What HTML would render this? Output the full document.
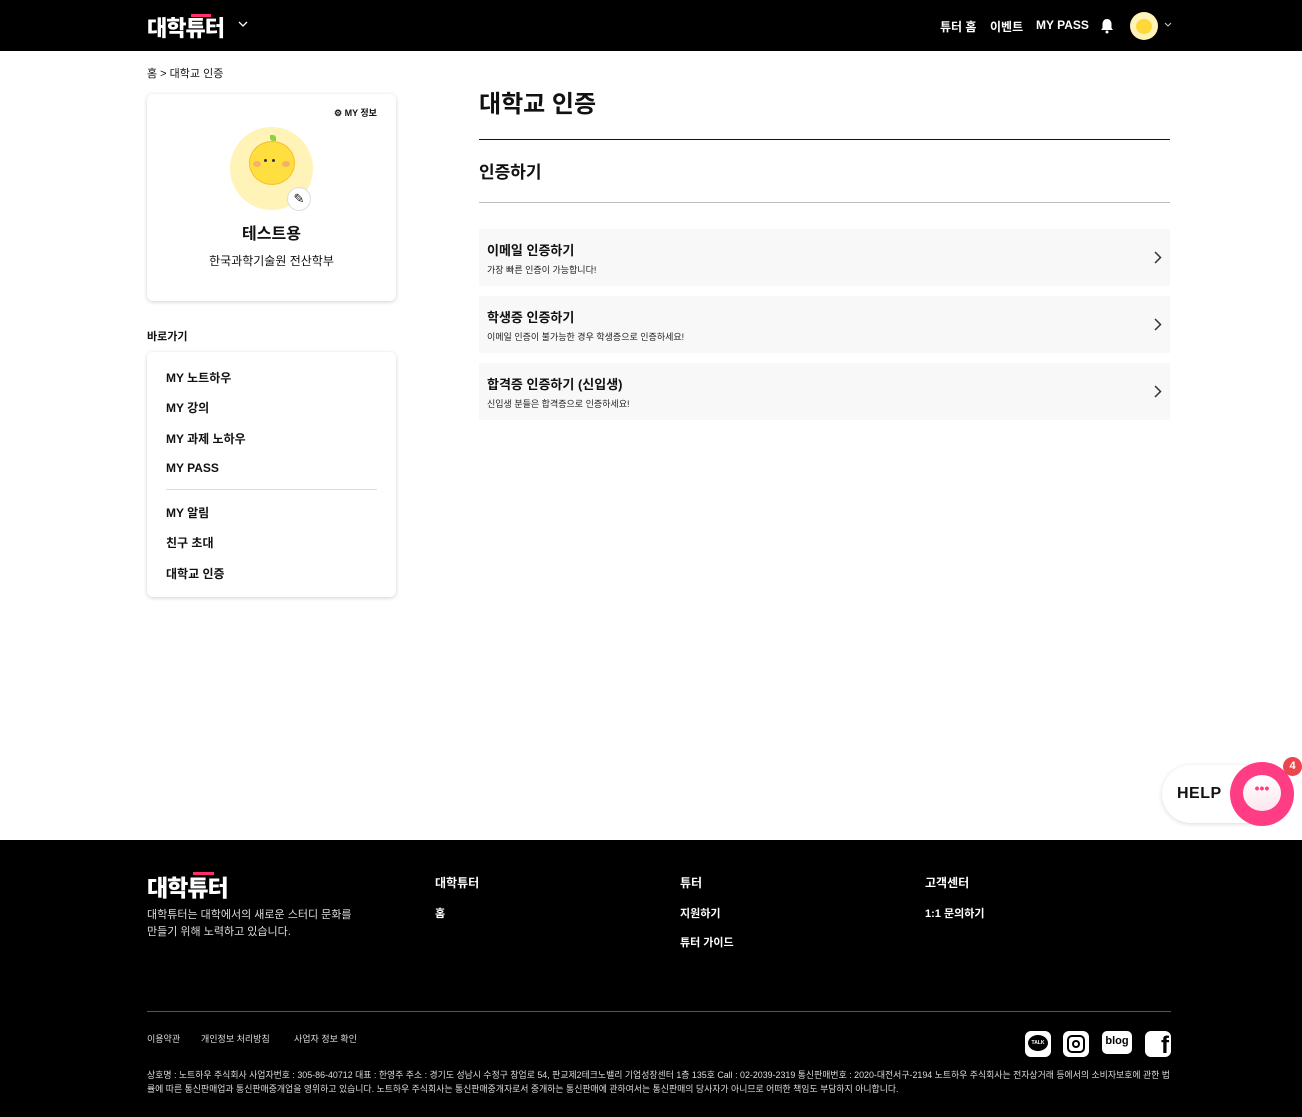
<!DOCTYPE html>
<html><head><meta charset="utf-8"><style>
*{margin:0;padding:0;box-sizing:border-box}
body{width:1302px;height:1117px;background:#fff;font-family:"Liberation Sans","Noto Sans CJK KR",sans-serif;color:#111;position:relative;overflow:hidden}
.abs{position:absolute}
.logo{font-weight:900;color:#fff;letter-spacing:-1px;position:absolute}
.logo i{position:absolute;background:#ff2f6e;height:3px}
.hd{position:absolute;left:0;top:0;width:1302px;height:51px;background:#000}
.nav{position:absolute;top:18px;color:#fff;font-weight:700;font-size:12px}
.card{position:absolute;background:#fff;border-radius:6px;box-shadow:0 1px 4px rgba(0,0,0,.18)}
.mi{position:absolute;left:19px;font-size:12px;font-weight:700}
.item{position:absolute;left:479px;width:691px;height:57px;background:#f8f8f8}
.item b{position:absolute;left:8px;top:11px;font-size:13px}
.item span{position:absolute;left:8px;top:34px;font-size:9px;color:#222}
.item svg{position:absolute;right:8px;top:22px}
.ft{position:absolute;left:0;top:840px;width:1302px;height:277px;background:#000;color:#fff}
.fh{position:absolute;font-size:12px;font-weight:700}
.fl{position:absolute;font-size:11px;font-weight:700}
</style></head><body>
<div class="hd">
  <div class="logo" style="left:147px;top:11px;font-size:22px">대학튜터<i style="left:44px;top:3px;width:20px"></i></div>
  <svg class="abs" style="left:238px;top:20px" width="10" height="8"><path d="M1 2l4 4 4-4" stroke="#fff" fill="none" stroke-width="1.3"/></svg>
  <div class="nav" style="left:940px">튜터 홈</div>
  <div class="nav" style="left:990px">이벤트</div>
  <div class="nav" style="left:1036px">MY PASS</div>
  <svg class="abs" style="left:1100px;top:18px" width="14" height="16"><path d="M7 1c-3 0-4.5 2.5-4.5 5v4L1 12h12l-1.5-2V6C11.5 3.5 10 1 7 1z" fill="#fff"/><circle cx="7" cy="14" r="1.5" fill="#fff"/></svg>
  <div class="abs" style="left:1130px;top:12px;width:28px;height:28px;border-radius:50%;background:#fff3b8"><div class="abs" style="left:6px;top:7px;width:16px;height:15px;border-radius:50%;background:#ffd83a"></div></div>
  <svg class="abs" style="left:1164px;top:22px" width="8" height="6"><path d="M1 1l3 3 3-3" stroke="#ccc" fill="none"/></svg>
</div>
<div class="abs" style="left:147px;top:65px;font-size:11px">홈 &gt; 대학교 인증</div>
<div class="card" style="left:147px;top:94px;width:249px;height:207px">
  <div class="abs" style="left:187px;top:12px;font-size:9px;font-weight:700">⚙ MY 정보</div>
  <div class="abs" style="left:83px;top:33px;width:83px;height:83px;border-radius:50%;background:#fff3b8">
    <div class="abs" style="left:19px;top:14px;width:46px;height:44px;border-radius:50%;background:#ffde3f;border:1px solid #f5c02c"></div>
    <div class="abs" style="left:34px;top:32px;width:3px;height:3px;border-radius:50%;background:#333"></div>
    <div class="abs" style="left:42px;top:32px;width:3px;height:3px;border-radius:50%;background:#333"></div>
    <div class="abs" style="left:23px;top:34px;width:8px;height:6px;border-radius:50%;background:#f7b06a"></div>
    <div class="abs" style="left:52px;top:34px;width:8px;height:6px;border-radius:50%;background:#f7b06a"></div>
    <div class="abs" style="left:40px;top:8px;width:6px;height:6px;border-radius:0 50%;background:#8fd13a"></div>
  </div>
  <div class="abs" style="left:140px;top:93px;width:24px;height:24px;border-radius:50%;background:#fff;border:1px solid #ddd;font-size:13px;text-align:center;line-height:22px">✎</div>
  <div class="abs" style="left:0;width:249px;text-align:center;top:126px;font-size:16px;font-weight:700">테스트용</div>
  <div class="abs" style="left:0;width:249px;text-align:center;top:158px;font-size:12px">한국과학기술원 전산학부</div>
</div>
<div class="abs" style="left:147px;top:328px;font-size:11px;font-weight:700">바로가기</div>
<div class="card" style="left:147px;top:352px;width:249px;height:245px">
  <div class="mi" style="top:17px">MY 노트하우</div>
  <div class="mi" style="top:47px">MY 강의</div>
  <div class="mi" style="top:78px">MY 과제 노하우</div>
  <div class="mi" style="top:109px">MY PASS</div>
  <div class="abs" style="left:19px;top:137px;width:211px;height:1px;background:#ddd"></div>
  <div class="mi" style="top:152px">MY 알림</div>
  <div class="mi" style="top:182px">친구 초대</div>
  <div class="mi" style="top:213px">대학교 인증</div>
</div>
<div class="abs" style="left:479px;top:84px;font-size:24px;font-weight:700">대학교 인증</div>
<div class="abs" style="left:479px;top:139px;width:691px;height:1px;background:#111"></div>
<div class="abs" style="left:479px;top:158px;font-size:17px;font-weight:700">인증하기</div>
<div class="abs" style="left:479px;top:202px;width:691px;height:1px;background:#bbb"></div>
<div class="item" style="top:229px"><b>이메일 인증하기</b><span>가장 빠른 인증이 가능합니다!</span><svg width="8" height="13"><path d="M1 1l5.5 5.5L1 12" stroke="#333" fill="none" stroke-width="1.5"/></svg></div>
<div class="item" style="top:296px"><b>학생증 인증하기</b><span>이메일 인증이 불가능한 경우 학생증으로 인증하세요!</span><svg width="8" height="13"><path d="M1 1l5.5 5.5L1 12" stroke="#333" fill="none" stroke-width="1.5"/></svg></div>
<div class="item" style="top:363px"><b>합격증 인증하기 (신입생)</b><span>신입생 분들은 합격증으로 인증하세요!</span><svg width="8" height="13"><path d="M1 1l5.5 5.5L1 12" stroke="#333" fill="none" stroke-width="1.5"/></svg></div>
<div class="abs" style="left:1162px;top:765px;width:120px;height:58px;border-radius:29px;background:#fff;box-shadow:0 1px 5px rgba(0,0,0,.15)"><div class="abs" style="left:15px;top:20px;font-size:16px;font-weight:900;letter-spacing:.5px">HELP</div></div>
<div class="abs" style="left:1230px;top:762px;width:64px;height:64px;border-radius:50%;background:#ff3d85">
  <div class="abs" style="left:13px;top:13px;width:38px;height:36px;border-radius:50%;background:linear-gradient(#fff,#fde6ee);color:#ff3d85;text-align:center;font-weight:900;font-size:14px;line-height:26px">•••</div>
</div>
<div class="abs" style="left:1283px;top:757px;width:19px;height:19px;border-radius:50%;background:#e9464f;color:#fff;font-size:11px;font-weight:700;text-align:center;line-height:19px">4</div>
<div class="ft">
  <div class="logo" style="left:147px;top:29px;font-size:23px">대학튜터<i style="left:46px;top:3px;width:21px"></i></div>
  <div class="abs" style="left:147px;top:67px;font-size:11px;line-height:17px;color:#ddd">대학튜터는 대학에서의 새로운 스터디 문화를<br>만들기 위해 노력하고 있습니다.</div>
  <div class="fh" style="left:435px;top:34px">대학튜터</div>
  <div class="fl" style="left:435px;top:65px">홈</div>
  <div class="fh" style="left:680px;top:34px">튜터</div>
  <div class="fl" style="left:680px;top:65px">지원하기</div>
  <div class="fl" style="left:680px;top:94px">튜터 가이드</div>
  <div class="fh" style="left:925px;top:34px">고객센터</div>
  <div class="fl" style="left:925px;top:65px">1:1 문의하기</div>
  <div class="abs" style="left:147px;top:171px;width:1024px;height:1px;background:#555"></div>
  <div class="abs" style="left:147px;top:192px;font-size:9px;color:#ddd">이용약관</div>
  <div class="abs" style="left:201px;top:192px;font-size:9px;color:#ddd">개인정보 처리방침</div>
  <div class="abs" style="left:294px;top:192px;font-size:9px;color:#ddd">사업자 정보 확인</div>
  <div class="abs" style="left:1025px;top:191px;width:26px;height:26px;border-radius:6px;background:#fff"><div class="abs" style="left:3px;top:4px;width:20px;height:16px;border-radius:50%;background:#000;color:#fff;font-size:5px;font-weight:700;text-align:center;line-height:16px">TALK</div></div>
  <div class="abs" style="left:1063px;top:191px;width:26px;height:26px;border-radius:6px;background:#fff"><div class="abs" style="left:4px;top:4px;width:18px;height:18px;border-radius:5px;border:2px solid #000"><div class="abs" style="left:3px;top:3px;width:8px;height:8px;border-radius:50%;border:2px solid #000"></div></div></div>
  <div class="abs" style="left:1102px;top:191px;width:30px;height:23px;border-radius:5px;background:#fff;color:#000;font-size:11px;font-weight:900;text-align:center;line-height:20px">blog</div>
  <div class="abs" style="left:1145px;top:191px;width:26px;height:26px;border-radius:6px;background:#fff;color:#000;font-size:24px;font-weight:900;text-align:right;line-height:30px;padding-right:2px;overflow:hidden">f</div>
  <div class="abs" style="left:147px;top:228px;width:1030px;font-size:8.9px;line-height:14px;color:#ddd;white-space:nowrap">상호명 : 노트하우 주식회사 사업자번호 : 305-86-40712 대표 : 한영주 주소 : 경기도 성남시 수정구 창업로 54, 판교제2테크노밸리 기업성장센터 1층 135호 Call : 02-2039-2319 통신판매번호 : 2020-대전서구-2194 노트하우 주식회사는 전자상거래 등에서의 소비자보호에 관한 법<br>률에 따른 통신판매업과 통신판매중개업을 영위하고 있습니다. 노트하우 주식회사는 통신판매중개자로서 중개하는 통신판매에 관하여서는 통신판매의 당사자가 아니므로 어떠한 책임도 부담하지 아니합니다.</div>
</div>
</body></html>
